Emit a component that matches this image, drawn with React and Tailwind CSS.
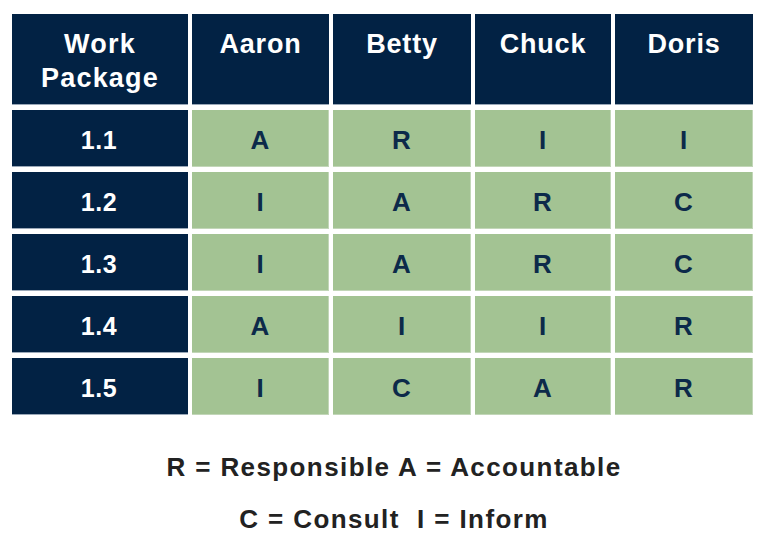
import React from 'react';

const PEOPLE = ['Aaron', 'Betty', 'Chuck', 'Doris'];

const ROWS = [
  { id: '1.1', roles: ['A', 'R', 'I', 'I'] },
  { id: '1.2', roles: ['I', 'A', 'R', 'C'] },
  { id: '1.3', roles: ['I', 'A', 'R', 'C'] },
  { id: '1.4', roles: ['A', 'I', 'I', 'R'] },
  { id: '1.5', roles: ['I', 'C', 'A', 'R'] },
];

const App = () => {
  return (
    <div
      className="w-[770px] h-[542px] bg-white overflow-hidden"
      style={{ fontFamily: '"Liberation Sans", Arial, sans-serif' }}
    >
      <div className="pl-[12px] pt-[14px]">
        <div className="grid grid-cols-[176px_137px_138px_136px_138px] grid-rows-[91px_57px_57px_57px_57px_57px] gap-x-[4px] gap-y-[5px]">
          {/* header row */}
          <div className="bg-[#022244] border-b border-[#9aa8b8] text-white font-bold text-[27px] leading-[34px] tracking-[1.2px] text-center pt-[13px]">
            Work
            <br />
            Package
          </div>
          {PEOPLE.map((p) => (
            <div
              key={p}
              className="bg-[#022244] border-b border-[#9aa8b8] text-white font-bold text-[27px] leading-[34px] tracking-[0.8px] text-center pt-[13px]"
            >
              {p}
            </div>
          ))}

          {ROWS.map((row) => (
            <React.Fragment key={row.id}>
              <div className="bg-[#022244] border-b border-[#9aa8b8] text-white font-bold text-[25px] tracking-[0.5px] flex items-center justify-center pt-[5px] pr-[2px]">
                {row.id}
              </div>
              {row.roles.map((r, i) => (
                <div
                  key={i}
                  className="bg-[#a3c393] border-b border-r border-[#c2d6b8] text-[#0c2a4a] font-bold text-[26px] flex items-center justify-center pt-[4px]"
                >
                  {r}
                </div>
              ))}
            </React.Fragment>
          ))}
        </div>
      </div>

      <div className="text-center text-[#222222] font-bold text-[26px] tracking-[1.4px] mt-[39px] leading-[26px] pl-[18px]">
        <div>R = Responsible A = Accountable</div>
        <div className="mt-[26px] whitespace-pre">{'C = Consult  I = Inform'}</div>
      </div>
    </div>
  );
};

export default App;
